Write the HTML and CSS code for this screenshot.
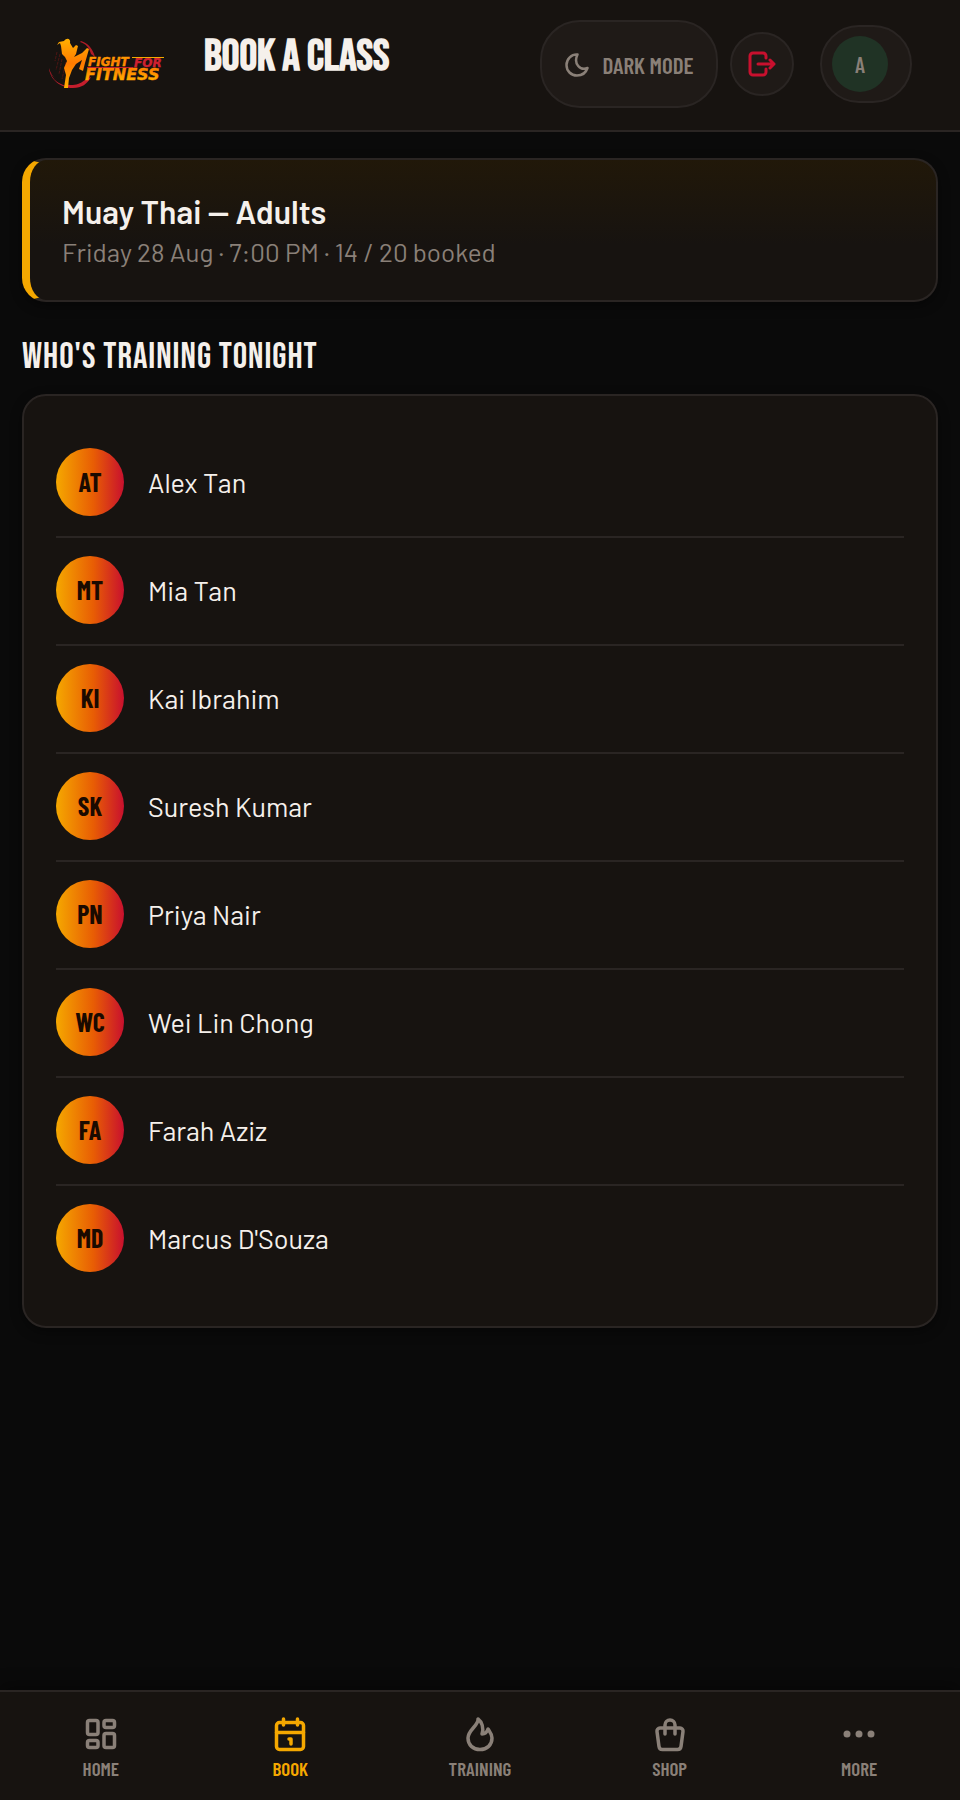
FILE: index.html
```html
<!DOCTYPE html>
<html lang="en">
<head>
<meta charset="utf-8">
<meta name="viewport" content="width=device-width, initial-scale=1">
<title>Book a Class</title>
<link rel="stylesheet" href="styles.css">
</head>
<body>
<header class="topbar">
  <a class="brand" href="#" aria-label="Fight For Fitness">
    <svg class="logo" viewBox="0 0 118 54" aria-hidden="true">
      <defs>
        <linearGradient id="fire" x1="0" y1="0" x2="0" y2="1"><stop offset="0" stop-color="#ffb000"/><stop offset=".5" stop-color="#ff7a00"/><stop offset="1" stop-color="#ffb000"/></linearGradient>
        <linearGradient id="word" x1="0" y1="0" x2="0" y2="1"><stop offset="0" stop-color="#ff6a00"/><stop offset="1" stop-color="#ffc400"/></linearGradient>
      </defs>
      <path d="M33 4c7 2 12 8 14 16l-4-3C41 10 38 7 32 5z" fill="#b01c28"/>
      <path d="M1 31c1 12 12 20 24 20 9 0 14-4 18-11l-6 3c-5 4-9 5-14 5C13 48 4 42 1 31z" fill="#c41e2d"/>
      <path d="M2 35c3 8 8 12 17 14l1-3C11 45 5 41 2 35z" fill="#171310"/>
      <path d="M9 15l-2 9m5-7l-4 16m6-11l-3 15m7-12l-4 17m7-12l-2 14" stroke="#4d1513" stroke-width="1" stroke-dasharray="3 1" fill="none"/>
      <path d="M11 5l5-1c3-4 7-2 6 2l3 5 3-3 2 1-2 8-2 3 8-4 5-5 2 1-4 14-2 8-4-2 3-9-6 4-4 6-3 8-1 10h-4l2-13-2-7 3-7-2-4-3-3-1-8-1-3-3 2z" fill="url(#fire)"/>
      <text x="40" y="29" class="logo-word logo-small" fill="url(#fire)" stroke="#ff9000">FIGHT</text>
      <text x="86" y="30" class="logo-word logo-small" fill="#cf2030" stroke="#cf2030">FOR</text>
      <text x="37" y="43" class="logo-word logo-large" fill="url(#word)" stroke="#ff9c00">FITNESS</text>
      <path d="M84 20h32v1H84z" fill="#f5a800"/><path d="M39 30h46v1H39z" fill="#c41e2d"/>
    </svg>
  </a>
  <h1 class="title">BOOK A CLASS</h1>
  <div class="actions">
    <button class="pill theme" type="button">
      <svg class="moon" viewBox="0 0 24 24" aria-hidden="true"><path d="M12.500 1.500C6.500 1 1.500 6 1.500 12s4.500 10.500 10.500 10.500c5 0 9-3 10.500-7.500-7 3-14.500-4-10-13.500z"/></svg>
      <span>DARK MODE</span>
    </button>
    <button class="pill logout" type="button" aria-label="Log out">
      <svg class="exit" viewBox="0 0 28 26" aria-hidden="true"><path d="M18 7V5a3 3 0 0 0-3-3H5a3 3 0 0 0-3 3v16a3 3 0 0 0 3 3h10a3 3 0 0 0 3-3v-3M10 13h16M22 9l4 4-4 4"/></svg>
    </button>
    <button class="pill profile" type="button" aria-label="Profile"><span class="initial">A</span></button>
  </div>
</header>

<main class="content">
  <section class="card session">
    <h2 class="session-name">Muay Thai — Adults</h2>
    <p class="session-info">Friday 28 Aug · 7:00 PM · 14 / 20 booked</p>
  </section>
  <h2 class="section-title">WHO'S TRAINING TONIGHT</h2>
  <ul class="card roster">
    <li class="member"><span class="avatar">AT</span><span>Alex Tan</span></li>
    <li class="member"><span class="avatar">MT</span><span>Mia Tan</span></li>
    <li class="member"><span class="avatar">KI</span><span>Kai Ibrahim</span></li>
    <li class="member"><span class="avatar">SK</span><span>Suresh Kumar</span></li>
    <li class="member"><span class="avatar">PN</span><span>Priya Nair</span></li>
    <li class="member"><span class="avatar">WC</span><span>Wei Lin Chong</span></li>
    <li class="member"><span class="avatar">FA</span><span>Farah Aziz</span></li>
    <li class="member"><span class="avatar">MD</span><span>Marcus D'Souza</span></li>
  </ul>
</main>

<nav class="tabs" aria-label="Main">
  <a class="tab" href="#">
    <svg class="tab-icon" viewBox="0 0 36 36" aria-hidden="true"><rect x="4.500" y="4.500" width="10.500" height="14" rx="2"/><rect x="21" y="4.500" width="10.500" height="7" rx="2"/><rect x="4.500" y="24.500" width="10.500" height="7" rx="2"/><rect x="21" y="17.500" width="10.500" height="14" rx="2"/></svg>
    <span>HOME</span>
  </a>
  <a class="tab tab-active" href="#" aria-current="page">
    <svg class="tab-icon" viewBox="0 0 36 36" aria-hidden="true"><rect x="4.500" y="6.500" width="27" height="27" rx="3"/><path d="M4.500 16.500h27M11.500 3v6M25.500 3v6M17 23h2v5"/></svg>
    <span>BOOK</span>
  </a>
  <a class="tab" href="#">
    <svg class="tab-icon" viewBox="0 0 36 36" aria-hidden="true"><path d="M16 3c1 6-10 11-10 19 0 7 5 11.500 12 11.500S30 29 30 22c0-4-2-6-4-9-1 3-3 5-6 5 2-6 0-12-4-15z"/></svg>
    <span>TRAINING</span>
  </a>
  <a class="tab" href="#">
    <svg class="tab-icon" viewBox="0 0 36 36" aria-hidden="true"><path d="M8 12h20a3 3 0 0 1 3 3.500l-2 15a3.500 3.500 0 0 1-3.500 3h-15A3.500 3.500 0 0 1 7 30.500l-2-15A3 3 0 0 1 8 12zM13 18V9a5 5 0 0 1 10 0v9"/></svg>
    <span>SHOP</span>
  </a>
  <a class="tab" href="#">
    <svg class="tab-icon dots" viewBox="0 0 36 36" aria-hidden="true"><circle cx="6" cy="18" r="3.500"/><circle cx="18" cy="18" r="3.500"/><circle cx="30" cy="18" r="3.500"/></svg>
    <span>MORE</span>
  </a>
</nav>
</body>
</html>
```

FILE: styles.css
```css
:root {
  --bg: #0a0a0a;
  --surface: #171310;
  --raised: #1f1a17;
  --line: #2a2523;
  --text: #f5f0eb;
  --muted: #8a8078;
  --amber: #f5a800;
  --red: #c8102e;
  --body: Barlow, Roboto, "Liberation Sans", sans-serif;
  --narrow: "Barlow Condensed", "Roboto Condensed", "Liberation Sans Narrow", Roboto, sans-serif;
  --display: "Bebas Neue", "Roboto Condensed", "Liberation Sans Narrow", Roboto, sans-serif;
}

* { box-sizing: border-box; }

body {
  margin: 0;
  min-height: 100vh;
  display: flex;
  flex-direction: column;
  background: var(--bg);
  color: var(--text);
  font-family: var(--body);
}

h1, h2, p, ul { margin: 0; }

.topbar {
  display: flex;
  align-items: center;
  padding: 20px 48px 22px;
  background: var(--surface);
  border-bottom: 2px solid var(--line);
}

.brand { display: flex; }
.logo { width: 118px; height: 54px; }
.logo-word { font-family: "DejaVu Sans", sans-serif; font-weight: 700; font-style: italic; stroke-width: .4; }
.logo-small { font-size: 12px; }
.logo-large { font-size: 16px; }

.title {
  margin-left: 38px;
  padding-bottom: 14px;
  font: 700 44px/48px var(--display);
  white-space: nowrap;
}

.actions {
  display: flex;
  align-items: center;
  gap: 12px;
  margin-left: auto;
}

.pill {
  display: flex;
  align-items: center;
  justify-content: center;
  padding: 0;
  border: 2px solid var(--line);
  border-radius: 40px;
  background: var(--raised);
  color: var(--muted);
  font: 600 23px/24px var(--narrow);
  white-space: nowrap;
}

.theme { gap: 14px; height: 88px; width: 178px; padding-top: 2px; }
.moon { width: 24px; height: 24px; fill: none; stroke: currentColor; stroke-width: 2.500; stroke-linejoin: round; }
.logout { width: 64px; height: 64px; color: var(--red); }
.exit { width: 28px; height: 26px; fill: none; stroke: currentColor; stroke-width: 3; stroke-linecap: round; stroke-linejoin: round; }
.profile { justify-content: flex-start; width: 92px; height: 78px; margin-left: 14px; padding-left: 10px; }

.initial {
  width: 56px;
  border-radius: 50%;
  background: #203325;
  font-size: 22px;
  line-height: 56px;
  text-align: center;
}

.content { flex: 1; padding: 26px 22px; }

.card {
  background: var(--surface);
  border: 2px solid var(--line);
  border-radius: 24px;
  box-shadow: 0 4px 12px rgba(0, 0, 0, .4);
}

.session {
  padding: 32px;
  border-left: 8px solid var(--amber);
  background: linear-gradient(#211809, var(--surface) 60%);
}

.session-name { font-size: 32px; font-weight: 600; line-height: 38px; }
.session-info { margin-top: 6px; color: var(--muted); font-size: 26px; line-height: 32px; }

.section-title {
  margin: 34px 0 14px;
  font: 400 36px/44px var(--display);
  letter-spacing: 1px;
}

.roster { padding: 34px 32px; list-style: none; }

.member {
  display: flex;
  align-items: center;
  gap: 24px;
  padding: 18px 0 20px;
  border-bottom: 2px solid var(--line);
  font-size: 27px;
  line-height: 36px;
}

.member:last-child { border-bottom: 0; }

.avatar {
  width: 68px;
  border-radius: 50%;
  background: linear-gradient(90deg, var(--amber), #e85d04 55%, var(--red));
  color: #1a0a00;
  font: 700 26px/68px var(--narrow);
  text-align: center;
}

.tabs {
  position: sticky;
  bottom: 0;
  display: flex;
  padding: 24px 6px 20px;
  background: var(--surface);
  border-top: 2px solid var(--line);
  box-shadow: 0 -4px 16px rgba(0, 0, 0, .4);
}

.tab {
  flex: 1;
  display: flex;
  flex-direction: column;
  align-items: center;
  gap: 6px;
  color: var(--muted);
  font: 600 19px/22px var(--narrow);
  text-decoration: none;
}

.tab-active { color: var(--amber); }
.tab-icon { width: 36px; height: 36px; fill: none; stroke: currentColor; stroke-width: 3.500; stroke-linecap: round; stroke-linejoin: round; }
.dots { fill: currentColor; stroke: none; }
```
